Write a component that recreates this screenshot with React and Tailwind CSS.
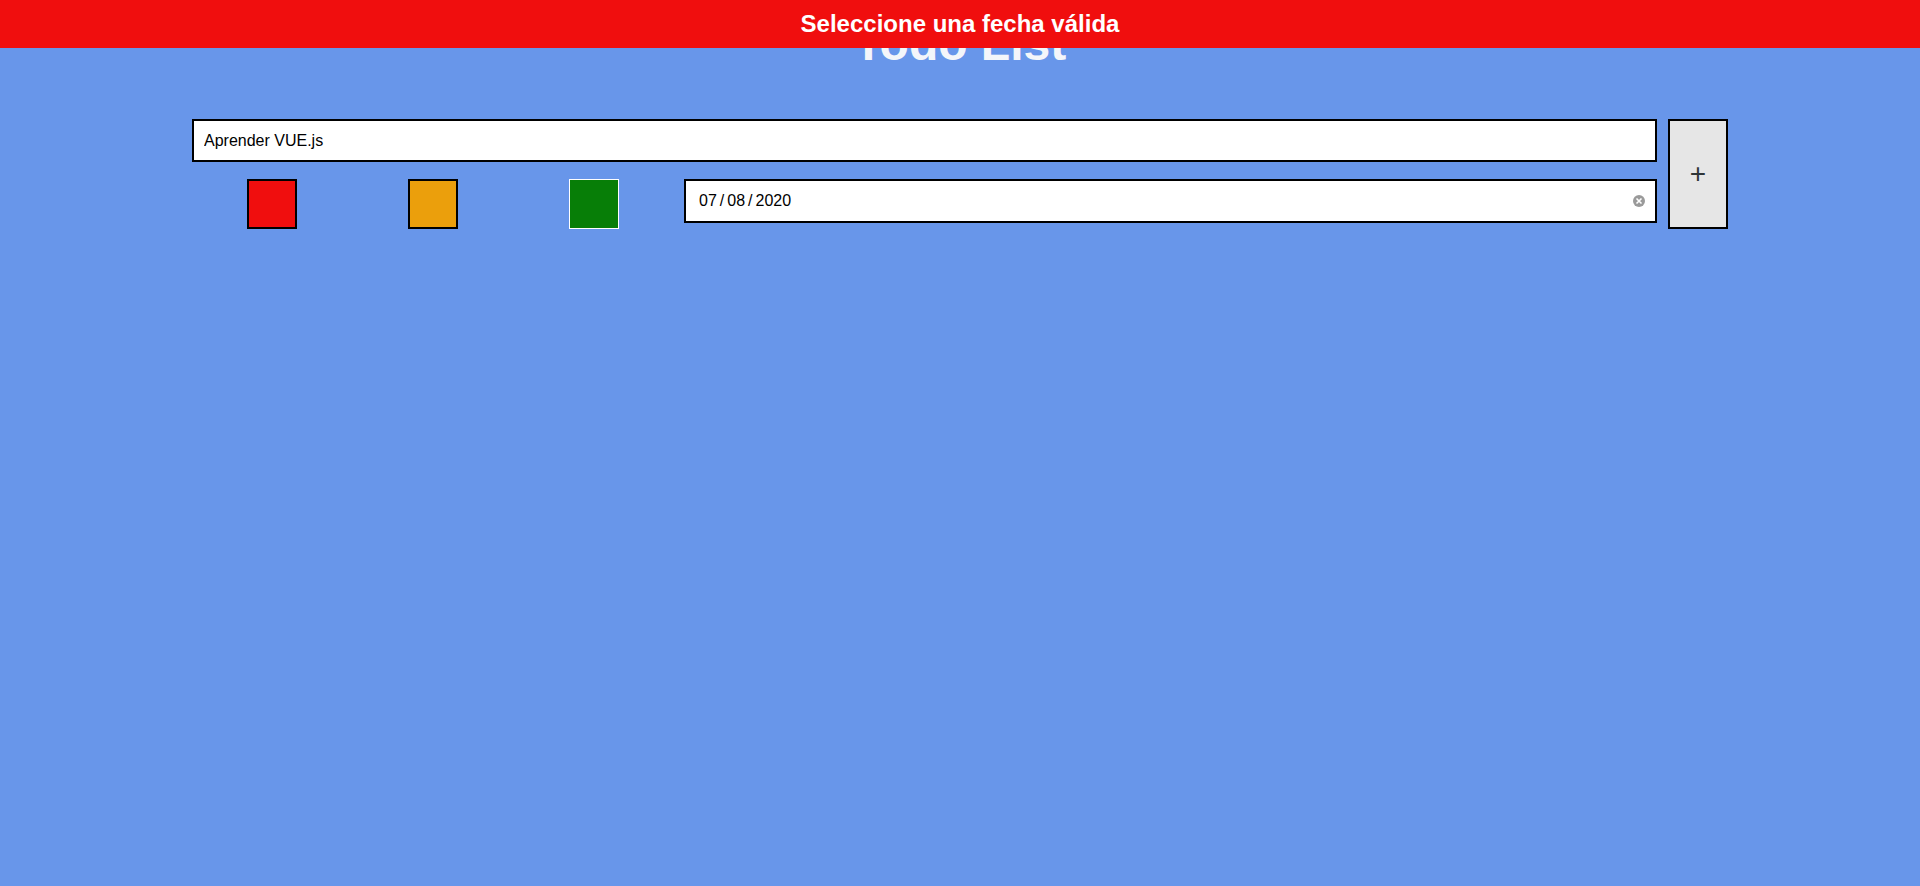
import React, { useState } from 'react'

const colors = [
  { name: 'red', cls: 'bg-[#f00e0e] border-black' },
  { name: 'orange', cls: 'bg-[#eb9f0c] border-black' },
  { name: 'green', cls: 'bg-[#077e07] border-white' },
]

export default function App() {
  const [task, setTask] = useState('Aprender VUE.js')
  const [selected, setSelected] = useState('green')

  return (
    <div className="min-h-screen bg-[#6896ea] font-['Liberation_Sans',Arial,sans-serif]">
      <div className="fixed top-0 left-0 right-0 h-12 bg-[#f00e0e] flex items-center justify-center z-10">
        <span className="text-white text-[24px] font-bold leading-none">Seleccione una fecha válida</span>
      </div>

      <h1 className="pt-4 text-center text-[48px] leading-[56px] font-bold text-[#f4f6fa]">Todo List</h1>

      <div className="w-[1536px] mx-auto mt-[47px] flex gap-[11px]">
        <div className="flex-1 flex flex-col gap-[17px]">
          <input
            value={task}
            onChange={e => setTask(e.target.value)}
            className="h-[43px] border-2 border-black bg-white px-[10px] text-[16px] text-black outline-none"
          />
          <div className="flex gap-[10px] items-start">
            <div className="w-[482px] flex justify-around">
              {colors.map(c => (
                <button
                  key={c.name}
                  onClick={() => setSelected(c.name)}
                  className={'w-[50px] h-[50px] ' + c.cls + (selected === c.name ? ' border' : ' border-2')}
                />
              ))}
            </div>
            <div className="flex-1 h-[44px] border-2 border-black bg-white flex items-center pl-[13px] pr-[10px] text-[16px] text-black">
              <span>07</span>
              <span className="mx-[3px]">/</span>
              <span>08</span>
              <span className="mx-[3px]">/</span>
              <span>2020</span>
              <span className="ml-auto w-3 h-3 rounded-full bg-[#9a9a9a] flex items-center justify-center">
                <svg width="8" height="8" viewBox="0 0 8 8">
                  <path d="M1.5 1.5 L6.5 6.5 M6.5 1.5 L1.5 6.5" stroke="#fff" strokeWidth="1.6" />
                </svg>
              </span>
            </div>
          </div>
        </div>
        <button className="w-[60px] border-2 border-black bg-[#e6e6e6] text-[#2f3537] text-[28px] leading-none flex items-center justify-center">
          +
        </button>
      </div>
    </div>
  )
}
